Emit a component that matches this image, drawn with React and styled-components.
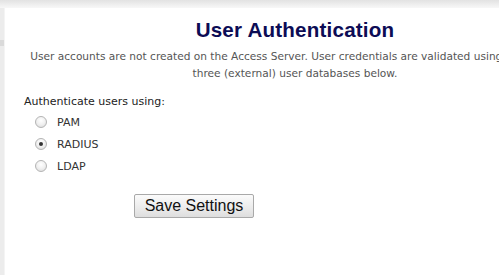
import React, { useState } from 'react';
import styled, { createGlobalStyle } from 'styled-components';

const GlobalStyle = createGlobalStyle`
  html, body {
    margin: 0;
    padding: 0;
    background: #ffffff;
    overflow: hidden;
  }
  body {
    font-family: "DejaVu Sans", Verdana, sans-serif;
  }
`

const Page = styled.div`
  width: 499px;
  height: 275px;
  display: grid;
  grid-template-rows: 8px 1fr;
  grid-template-columns: 5px 1fr;
  overflow: hidden;
`

const TopBar = styled.div`
  grid-column: 1 / 3;
  background: linear-gradient(180deg, #e2e2e2 0%, #efefef 60%, #f7f7f7 100%);
`

const Sidebar = styled.div`
  background: #ececec;
  border-right: 1px solid #f4f4f4;
  display: flex;
  flex-direction: column;
  padding-top: 32px;

  .item {
    height: 6px;
    background: #dadada;
  }
`

const Main = styled.div`
  width: 580px;
  padding: 9px 20px 0;
  box-sizing: border-box;
  background: #ffffff;
`

const Title = styled.h1`
  margin: 0;
  text-align: center;
  font-family: "Liberation Sans", Arial, sans-serif;
  font-weight: bold;
  font-size: 20.6px;
  line-height: 26px;
  color: #0c0c55;
  letter-spacing: 0.2px;
`

const Intro = styled.p`
  margin: 5px 0 0;
  text-align: center;
  font-size: 10.6px;
  line-height: 17px;
  color: #555555;
`

const Form = styled.div`
  margin-top: 13px;
  display: flex;
  flex-direction: column;
`

const Legend = styled.div`
  font-size: 11px;
  line-height: 14px;
  color: #222222;
  margin-left: -1px;
`

const Options = styled.div`
  display: flex;
  flex-direction: column;
  padding-left: 10px;
  margin-top: 2px;
`

const Option = styled.label`
  display: flex;
  align-items: center;
  gap: 10px;
  height: 22px;
  font-size: 11px;
  color: #333333;
  cursor: pointer;
`

const Radio = styled.span`
  width: 10px;
  height: 10px;
  border-radius: 50%;
  border: 1px solid #b4b4b4;
  background: radial-gradient(circle at 50% 35%, #ffffff 0%, #f0f0f0 50%, #d8d8d8 100%);
  display: flex;
  align-items: center;
  justify-content: center;

  &::after {
    content: "";
    width: 4px;
    height: 4px;
    border-radius: 50%;
    background: ${(p) => (p.$checked ? '#333333' : 'transparent')};
  }
`

const Actions = styled.div`
  display: flex;
  padding-left: 109px;
  margin-top: 17px;
`

const Button = styled.button`
  width: 120px;
  height: 24px;
  padding: 0;
  font-family: "Liberation Sans", Arial, sans-serif;
  font-size: 16px;
  color: #111111;
  border: 1px solid #a9a9a9;
  border-radius: 2px;
  background: linear-gradient(180deg, #fbfbfb 0%, #ececec 55%, #dedede 100%);
  cursor: pointer;
`

const methods = ['PAM', 'RADIUS', 'LDAP'];

function App() {
  const [method, setMethod] = useState('RADIUS');

  return (
    <Page>
      <GlobalStyle />
      <TopBar />
      <Sidebar>
        <div className="item" />
      </Sidebar>
      <Main>
        <Title>User Authentication</Title>
        <Intro>
          User accounts are not created on the Access Server. User credentials are validated using one of the
          three (external) user databases below.
        </Intro>
        <Form>
          <Legend>Authenticate users using:</Legend>
          <Options>
            {methods.map((m) => (
              <Option key={m} onClick={() => setMethod(m)}>
                <Radio $checked={method === m} />
                {m}
              </Option>
            ))}
          </Options>
          <Actions>
            <Button>Save Settings</Button>
          </Actions>
        </Form>
      </Main>
    </Page>
  );
}

export default App;
